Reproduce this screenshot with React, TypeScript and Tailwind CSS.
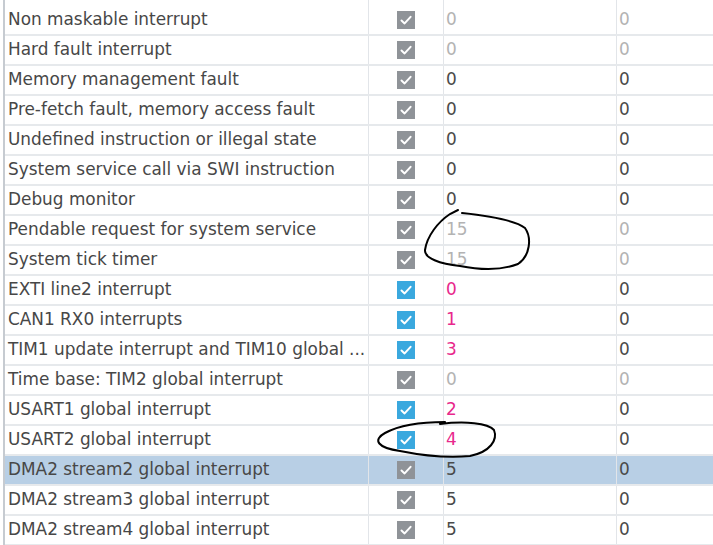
import React from 'react';

type Tone = 'off' | 'dark' | 'pink';

interface Row {
  name: string;
  enabled: boolean;
  pre: string;
  preTone: Tone;
  sub: string;
  subTone: Tone;
  selected?: boolean;
}

const rows: Row[] = [
  { name: 'Non maskable interrupt', enabled: false, pre: '0', preTone: 'off', sub: '0', subTone: 'off' },
  { name: 'Hard fault interrupt', enabled: false, pre: '0', preTone: 'off', sub: '0', subTone: 'off' },
  { name: 'Memory management fault', enabled: false, pre: '0', preTone: 'dark', sub: '0', subTone: 'dark' },
  { name: 'Pre-fetch fault, memory access fault', enabled: false, pre: '0', preTone: 'dark', sub: '0', subTone: 'dark' },
  { name: 'Undefined instruction or illegal state', enabled: false, pre: '0', preTone: 'dark', sub: '0', subTone: 'dark' },
  { name: 'System service call via SWI instruction', enabled: false, pre: '0', preTone: 'dark', sub: '0', subTone: 'dark' },
  { name: 'Debug monitor', enabled: false, pre: '0', preTone: 'dark', sub: '0', subTone: 'dark' },
  { name: 'Pendable request for system service', enabled: false, pre: '15', preTone: 'off', sub: '0', subTone: 'off' },
  { name: 'System tick timer', enabled: false, pre: '15', preTone: 'off', sub: '0', subTone: 'off' },
  { name: 'EXTI line2 interrupt', enabled: true, pre: '0', preTone: 'pink', sub: '0', subTone: 'dark' },
  { name: 'CAN1 RX0 interrupts', enabled: true, pre: '1', preTone: 'pink', sub: '0', subTone: 'dark' },
  { name: 'TIM1 update interrupt and TIM10 global ...', enabled: true, pre: '3', preTone: 'pink', sub: '0', subTone: 'dark' },
  { name: 'Time base: TIM2 global interrupt', enabled: false, pre: '0', preTone: 'off', sub: '0', subTone: 'off' },
  { name: 'USART1 global interrupt', enabled: true, pre: '2', preTone: 'pink', sub: '0', subTone: 'dark' },
  { name: 'USART2 global interrupt', enabled: true, pre: '4', preTone: 'pink', sub: '0', subTone: 'dark' },
  { name: 'DMA2 stream2 global interrupt', enabled: false, pre: '5', preTone: 'dark', sub: '0', subTone: 'dark', selected: true },
  { name: 'DMA2 stream3 global interrupt', enabled: false, pre: '5', preTone: 'dark', sub: '0', subTone: 'dark' },
  { name: 'DMA2 stream4 global interrupt', enabled: false, pre: '5', preTone: 'dark', sub: '0', subTone: 'dark' },
];

const toneClass = (t: Tone) => {
  if (t === 'pink') return 'text-[#e8288c]';
  if (t === 'off') return 'text-[#b3b3b3]';
  return 'text-[#4a4a4a]';
};

const CheckBox = ({ on }: { on: boolean }) => (
  <svg width="18" height="18" viewBox="0 0 18 18">
    <rect x="0" y="0" width="18" height="18" fill={on ? '#3aa8de' : '#8f9398'} />
    <path d="M4.5 9.5 L7.6 12.4 L13.6 5.8" fill="none" stroke="#ffffff" strokeWidth="2" strokeLinecap="round" strokeLinejoin="round" />
  </svg>
);

const Cells = ({ row }: { row?: Row }) => (
  <>
    <div className="w-[364px] shrink-0 h-full flex items-center pl-[3px] pr-1 border-r border-[#e2e5e9] overflow-hidden whitespace-nowrap text-[#474747]">
      {row?.name}
    </div>
    <div className="w-[75px] shrink-0 h-full flex items-center justify-center border-r border-[#e2e5e9]">
      {row && <CheckBox on={row.enabled} />}
    </div>
    <div className={`w-[173px] shrink-0 h-full flex items-center pl-[2px] border-r border-[#e2e5e9] ${row ? toneClass(row.preTone) : ''}`}>
      {row?.pre}
    </div>
    <div className={`flex-1 h-full flex items-center pl-[2px] ${row ? toneClass(row.subTone) : ''}`}>
      {row?.sub}
    </div>
  </>
);

export default function App() {
  return (
    <div className="relative w-[713px] h-[545px] overflow-hidden bg-white pl-[3px] text-[16.9px] font-['DejaVu_Sans',sans-serif]">
      <div className="h-full border-l-2 border-[#c6cbd1]">
        <div className="h-[6px] flex">
          <Cells />
        </div>
        {rows.map((r) => (
          <div
            key={r.name}
            className={`h-[30px] flex border-b-2 border-[#e6e9ec] ${r.selected ? 'bg-[#b8cfe5]' : ''}`}
          >
            <Cells row={r} />
          </div>
        ))}
      </div>

      {/* hand-drawn annotations */}
      <svg className="absolute left-0 top-0 pointer-events-none" width="713" height="545" viewBox="0 0 713 545">
        <path
          d="M458 210 L450 214 C438 222, 427 236, 425 250 C424 258, 440 264, 460 266 C480 270, 500 271, 518 264 C530 256, 532 238, 525 228 C515 220, 490 216, 462 213"
          fill="none"
          stroke="#000"
          strokeWidth="2"
          strokeLinecap="round"
        />
        <path
          d="M445 422 C420 422, 398 426, 385 433 C372 440, 378 448, 400 451 C425 456, 450 458, 470 456 C490 452, 498 440, 494 430 C488 423, 465 421, 440 424"
          fill="none"
          stroke="#000"
          strokeWidth="2"
          strokeLinecap="round"
        />
      </svg>
    </div>
  );
}
